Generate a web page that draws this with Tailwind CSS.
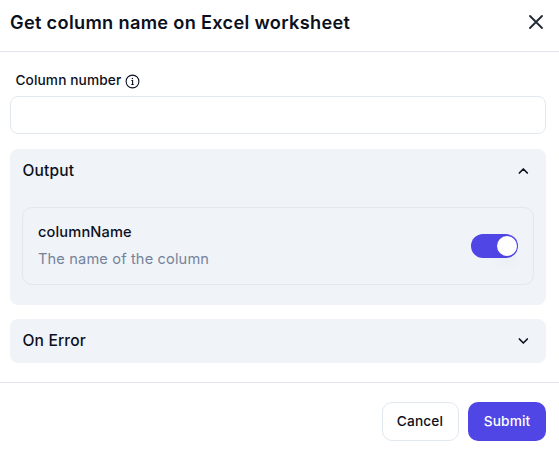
<!DOCTYPE html>
<html lang="en"><head><meta charset="utf-8"><title>Get column name</title>
<script src="https://cdn.jsdelivr.net/npm/@tailwindcss/browser@4"></script></head>
<body class="bg-white font-['Inter',sans-serif] text-[#0b1020] tracking-[.15px] overflow-hidden">
<div class="w-[559px] h-[452px] flex flex-col">
<header class="h-[52px] shrink-0 border-b border-[#e2e5ec] flex items-center justify-between pl-[10px] pr-[11px] pb-[6px]">
<h1 class="text-[18.2px] leading-7 -mt-[2px] font-semibold tracking-[.31px] whitespace-nowrap">Get column name on Excel worksheet</h1>
<button aria-label="Close" class="-mt-px text-[#252a38]"><svg class="w-6 h-6" viewBox="0 0 24 24" fill="none" stroke="currentColor" stroke-width="1.9" stroke-linecap="round" stroke-linejoin="round"><path d="M18 6 6 18M6 6l12 12"/></svg></button>
</header>
<main class="h-[330px] shrink-0 pl-[10px] pr-[13px] pt-[18px]">
<label class="flex items-center gap-[3.8px] pl-[5.4px] h-5 text-[13.7px] leading-5 font-medium tracking-[.12px]">Column number
<svg class="w-[15px] h-[15px] mt-[3px]" viewBox="0 0 15 15" fill="none" stroke="currentColor" stroke-width="1.1"><circle cx="7.5" cy="7.5" r="6.4"/><path d="M6.4 6.5h1.2v4M6.3 10.5h2.4"/><circle cx="7.4" cy="4.5" r=".7" fill="currentColor" stroke="none"/></svg></label>
<input class="block w-full h-[38px] mt-[6px] rounded-lg border border-slate-200 bg-white px-3" aria-label="Column number">
<section class="mt-[15px] h-[156px] rounded-lg bg-[#f0f3f8] px-3 pt-[11px]">
<div class="flex h-[22px] items-center justify-between pl-[.5px] pr-[2px]"><h2 class="text-[15.5px] leading-6 font-medium">Output</h2><svg class="w-4 h-4 mr-px" viewBox="0 0 24 24" fill="none" stroke="currentColor" stroke-width="2.5" stroke-linecap="round" stroke-linejoin="round"><path d="m18.5 15-6-6-6 6"/></svg></div>
<div class="mt-[25px] h-[78px] rounded-[10px] border border-slate-200 flex items-center justify-between px-[15px]">
<div class="-mt-[2px]"><p class="text-[14.6px] leading-6 font-medium">columnName</p><p class="mt-[3px] text-[14.6px] leading-6 text-[#75839a]">The name of the column</p></div>
<button role="switch" aria-checked="true" aria-label="Output column name" class="w-[47px] h-6 rounded-full bg-[#4f46e5] flex items-center justify-end pr-px"><span class="w-5 h-5 rounded-full bg-white shadow-[0_10px_15px_-3px_rgba(0,0,0,0.05)]"></span></button>
</div></section>
<section class="mt-[14px] h-[44px] rounded-lg bg-[#f0f3f8] pl-[12.5px] pr-[15px] pb-px flex items-center justify-between"><h2 class="text-[15.6px] leading-6 font-medium">On Error</h2><svg class="w-4 h-4 mt-px" viewBox="0 0 24 24" fill="none" stroke="currentColor" stroke-width="2.5" stroke-linecap="round" stroke-linejoin="round"><path d="m6.5 9 6 6 6-6"/></svg></section>
</main>
<footer class="h-[70px] border-t border-[#e2e5ee] flex justify-end gap-[9px] pt-[19px] pr-[13px] text-[13.7px] leading-5">
<button class="w-[77px] h-[39px] rounded-[10px] border border-slate-200 pb-px pr-px font-medium tracking-[.15px]">Cancel</button>
<button class="w-[78px] h-[39px] rounded-[10px] bg-[#4f46e5] text-white pb-px font-medium tracking-[.15px]">Submit</button>
</footer></div></body></html>
